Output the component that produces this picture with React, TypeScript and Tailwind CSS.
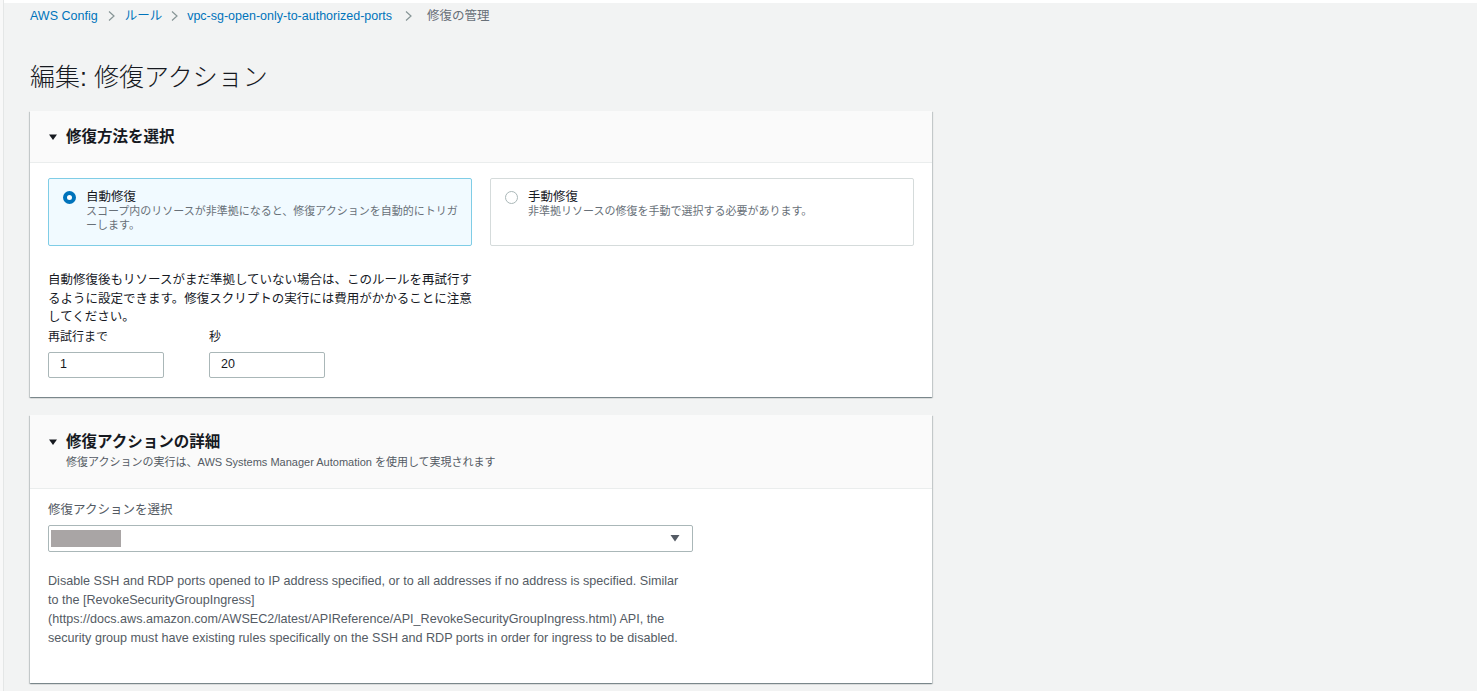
const FONT = "font-['Liberation_Sans','Noto_Sans_CJK_JP',sans-serif]";
const CARD_SHADOW =
  "shadow-[0_1px_1px_0_rgba(0,28,36,0.3),1px_1px_1px_0_rgba(0,28,36,0.15),-1px_1px_1px_0_rgba(0,28,36,0.15)]";

const DESCRIPTION = [
  "Disable SSH and RDP ports opened to IP address specified, or to all addresses if no address is specified. Similar",
  "to the [RevokeSecurityGroupIngress]",
  "(https://docs.aws.amazon.com/AWSEC2/latest/APIReference/API_RevokeSecurityGroupIngress.html) API, the",
  "security group must have existing rules specifically on the SSH and RDP ports in order for ingress to be disabled.",
];

function Caret() {
  return (
    <svg width="10" height="8" viewBox="0 0 10 8" className="shrink-0">
      <path d="M1 1.5h8L5 7z" fill="#16191f" />
    </svg>
  );
}

function Chevron() {
  return (
    <svg width="9" height="12" viewBox="0 0 9 12" className="shrink-0">
      <path d="M2 1.5l5 4.5-5 4.5" fill="none" stroke="#879596" strokeWidth="1.2" />
    </svg>
  );
}

function Radio({ checked }: { checked: boolean }) {
  return checked ? (
    <span className="mt-[2px] block h-[13px] w-[13px] shrink-0 rounded-full border-[4px] border-[#0073bb] bg-white" />
  ) : (
    <span className="mt-[2px] block h-[13px] w-[13px] shrink-0 rounded-full border border-[#aab7b8] bg-white" />
  );
}

function Tile({
  checked,
  title,
  desc,
}: {
  checked: boolean;
  title: string;
  desc: string;
}) {
  return (
    <div
      className={
        checked
          ? "flex h-[68px] w-[424px] gap-[10px] rounded-[2px] border border-[#7fcde6] bg-[#f1faff] pl-[14px] pr-[8px] pt-[10px]"
          : "flex h-[68px] w-[424px] gap-[10px] rounded-[2px] border border-[#d5dbdb] bg-white pl-[14px] pr-[8px] pt-[10px]"
      }
    >
      <Radio checked={checked} />
      <div>
        <div className="text-[12.5px] leading-[16px] text-[#16191f]">{title}</div>
        <div className="text-[11px] leading-[13.5px] text-[#687078]">{desc}</div>
      </div>
    </div>
  );
}

function CardHeader({ title, sub }: { title: string; sub?: string }) {
  return (
    <div
      className={
        sub
          ? "h-[74px] border-b border-[#eaeded] bg-[#fafafa] px-[18px] pt-[17px]"
          : "flex h-[52px] items-center border-b border-[#eaeded] bg-[#fafafa] px-[18px]"
      }
    >
      <div className="flex items-center gap-[8px]">
        <Caret />
        <h2 className="text-[15.5px] font-bold leading-[20px] text-[#16191f]">{title}</h2>
      </div>
      {sub && (
        <div className="mt-[2px] pl-[18px] text-[11px] leading-[16px] text-[#545b64]">{sub}</div>
      )}
    </div>
  );
}

export default function App() {
  return (
    <div className={`flex min-h-screen bg-white ${FONT}`}>
      <div className="w-[4px] shrink-0 border-r border-[#e4e6e6] bg-[#f8f8f8]" />
      <main className="mt-[3px] flex-1 bg-[#f2f3f3] pb-[8px] pl-[26px]">
        {/* breadcrumb */}
        <nav className="flex items-center pt-[4px] text-[12.5px] leading-[18px]">
          <span className="text-[#0073bb]">AWS Config</span>
          <span className="mx-[9px]"><Chevron /></span>
          <span className="text-[#0073bb]">ルール</span>
          <span className="mx-[8px]"><Chevron /></span>
          <span className="text-[#0073bb]">vpc-sg-open-only-to-authorized-ports</span>
          <span className="ml-[12px] mr-[14px]"><Chevron /></span>
          <span className="text-[#687078]">修復の管理</span>
        </nav>

        <h1 className="mt-[36px] text-[25px] font-light leading-[32px] text-[#16191f]">
          編集: 修復アクション
        </h1>

        {/* remediation method */}
        <section className={`mt-[18px] w-[902px] bg-white ${CARD_SHADOW}`}>
          <CardHeader title="修復方法を選択" />
          <div className="px-[18px] pb-[19px] pt-[15px]">
            <div className="flex gap-[18px]">
              <Tile
                checked
                title="自動修復"
                desc="スコープ内のリソースが非準拠になると、修復アクションを自動的にトリガーします。"
              />
              <Tile
                checked={false}
                title="手動修復"
                desc="非準拠リソースの修復を手動で選択する必要があります。"
              />
            </div>
            <p className="mt-[25px] w-[432px] text-[12.5px] leading-[18.5px] text-[#16191f]">
              自動修復後もリソースがまだ準拠していない場合は、このルールを再試行するように設定できます。修復スクリプトの実行には費用がかかることに注意してください。
            </p>
            <div className="mt-[2px] flex gap-[45px]">
              <label className="block">
                <span className="block text-[12px] leading-[16px] text-[#16191f]">再試行まで</span>
                <div className="mt-[7px] flex h-[26px] w-[116px] items-center rounded-[2px] border border-[#aab7b8] pl-[11px] text-[12.5px] text-[#16191f]">
                  1
                </div>
              </label>
              <label className="block">
                <span className="block text-[12px] leading-[16px] text-[#16191f]">秒</span>
                <div className="mt-[7px] flex h-[26px] w-[116px] items-center rounded-[2px] border border-[#aab7b8] pl-[11px] text-[12.5px] text-[#16191f]">
                  20
                </div>
              </label>
            </div>
          </div>
        </section>

        {/* remediation action details */}
        <section className={`mt-[18px] w-[902px] bg-white ${CARD_SHADOW}`}>
          <CardHeader
            title="修復アクションの詳細"
            sub="修復アクションの実行は、AWS Systems Manager Automation を使用して実現されます"
          />
          <div className="px-[18px] pb-[35px] pt-[13px]">
            <div className="text-[12.5px] leading-[16px] text-[#545b64]">修復アクションを選択</div>
            <div className="mt-[7px] flex h-[27px] w-[645px] items-center justify-between rounded-[2px] border border-[#aab7b8] pl-[2px] pr-[12px]">
              <span className="block h-[17px] w-[70px] bg-[#a9a5a5]" />
              <svg width="10" height="8" viewBox="0 0 10 8">
                <path d="M0.5 1h9L5 7.5z" fill="#545b64" />
              </svg>
            </div>
            <div className="mt-[20px] text-[12.6px] leading-[19px] text-[#545b64]">
              {DESCRIPTION.map((line) => (
                <div key={line} className="whitespace-nowrap">
                  {line}
                </div>
              ))}
            </div>
          </div>
        </section>
      </main>
    </div>
  );
}
